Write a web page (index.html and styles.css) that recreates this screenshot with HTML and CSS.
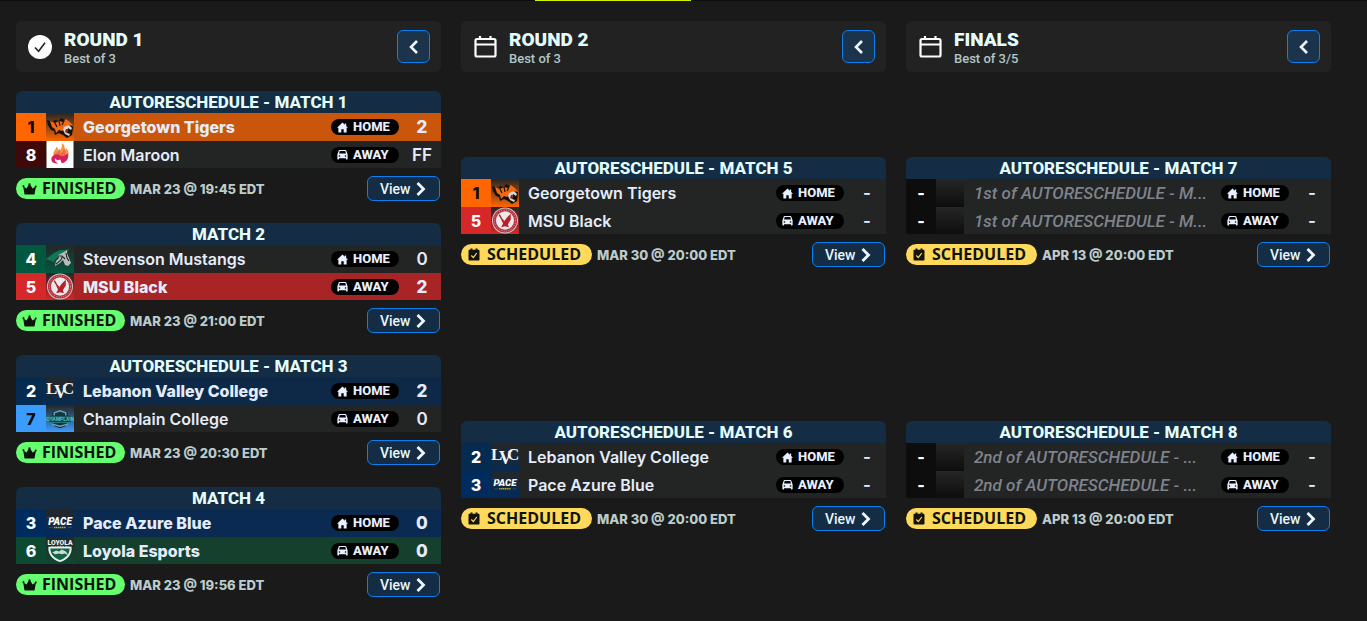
FILE: index.html
```
<!DOCTYPE html>
<html lang="en">
<head>
    <meta charset="utf-8">
    <title>Playoff Bracket</title>
    <link rel="stylesheet" href="styles.css">
</head>
<body>
    <!-- icons and team logos -->
    <svg class="sprite" aria-hidden="true">
        <symbol id="i-check" viewBox="0 0 24 24"><circle cx="12" cy="12" r="12" fill="#fff"/><path d="M7 12.5l3.6 3.8L17 7.8" fill="none" stroke="#222" stroke-width="1.6"/></symbol>
        <symbol id="i-calendar" viewBox="0 0 24 24"><path d="M4 4h17a1.500 1.500 0 0 1 1.500 1.500v14.500a1.500 1.500 0 0 1-1.500 1.500h-17A1.500 1.500 0 0 1 2.500 20V5.500A1.500 1.500 0 0 1 4 4zM2.500 9.500h20M7 1v3M17.500 1v3" fill="none" stroke="#fff" stroke-width="2.200"/></symbol>
        <symbol id="i-left" viewBox="0 0 10 14"><path d="M8 1L2 7l6 6" fill="none" stroke="#eef6ff" stroke-width="2.600"/></symbol>
        <symbol id="i-right" viewBox="0 0 10 14"><path d="M1.500 1l6 6-6 6" fill="none" stroke="#eef6ff" stroke-width="2.800"/></symbol>
        <symbol id="i-home" viewBox="0 0 12 12"><path d="M6 .5L0 6.400h1.500V11.500h3.200V8h2.600v3.500h3.200V6.400H12L10 4.400V1.500H8.500v1.500z" fill="#e8f0ff"/></symbol>
        <symbol id="i-car" viewBox="0 0 12 12"><path fill-rule="evenodd" d="M2.800 1h6.400c.5 0 .8.300 1 .8L11.600 6v5c0 .3-.2.500-.5.500h-.8c-.3 0-.5-.2-.5-.5v-.8H2.200v.8c0 .3-.2.500-.5.500H.9c-.3 0-.5-.2-.5-.5V6l1.400-4.200c.2-.5.500-.8 1-.8zM3 2.200L2.200 5h7.600L9 2.200zM2.700 6.700a.9.9 0 1 0 0 1.800.9.9 0 0 0 0-1.800zM9.300 6.700a.9.9 0 1 0 0 1.800.9.9 0 0 0 0-1.800z" fill="#e8f0ff"/></symbol>
        <symbol id="i-crown" viewBox="0 0 14 12"><path d="M0 3.200a1 1 0 1 1 1.600.8L4 5.500l2-3.600a1.100 1.100 0 1 1 2 0l2 3.600L12.400 4a1 1 0 1 1 .9.500L12 11.500H2L.8 4.300A1 1 0 0 1 0 3.200z" fill="#0c140c"/></symbol>
        <symbol id="i-scheduled" viewBox="0 0 12 12"><path d="M1.500 1.300H2.500V0h2v1.300h3V0h2v1.300h1c.6 0 1 .4 1 1V11c0 .6-.4 1-1 1h-9c-.6 0-1-.4-1-1V2.300c0-.6.400-1 1-1z" fill="#14130c"/><path d="M3.300 7l2 2 3.500-4.500" fill="none" stroke="#ffd95c" stroke-width="1.200"/></symbol>

        <symbol id="l-georgetown" viewBox="0 0 28 28">
            <path d="M1 7l6 2 2-2 4 1 2-3 4 2 4 1 4 6-1 8-5 3-4-3-4-2-4 2-1-4-3-1-3-5z" fill="#15110e"/>
            <path d="M4 8l5 2 4-2 4 1 3-3 4 3 3 4-4-1-4 3-3 3-3-1-3 3-1-4-3-2z" fill="#f06a16"/>
            <path d="M9 10l2 4M13 8l1 5M18 8l-2 4" stroke="#15110e" stroke-width="1.200"/>
            <path d="M18 14l5-2 3 3-1 2-3-2-1 5 3 1-1 2-4-2-2-4z" fill="#d8d6d2"/>
            <path d="M20 16l2 0-1 4-2-1z" fill="#a3190f"/>
        </symbol>
        <symbol id="l-elon" viewBox="0 0 28 28">
            <path fill="#fff" d="M0 0h28v28H0z"/>
            <path d="M7 14c0-4 3-5 3-8 2 1 3 3 2 5 4-2 4-5 4-9 4 3 3 7 2 9 2-1 2-3 2-4 4 4 3 8 2 10z" fill="#f8963c"/>
            <path d="M8 13c3 0 5-3 5-5 2 2 1 4 1 5 3-1 4-4 4-6 3 4 1 6 1 8 2 0 3-2 3-3 1 3 1 6-1 8h-5l-4-3-5 1z" fill="#ee6a4f"/>
            <path d="M5 19c0-3 3-5 6-5 2 0 4 2 6 2l5-3c1 5-1 9-6 10-1-1-1-3-2-4-1 2-4 1-5-1-1 2 0 4 3 5-4 1-7-1-7-4z" fill="#d51f63"/>
        </symbol>
        <symbol id="l-stevenson" viewBox="0 0 28 28">
            <path d="M0 14l8-6 6-3 5 0 4-1-2 4-7 2-4 4-2 2 2 2-5-2z" fill="#0d7757"/>
            <path d="M12 10l6-3 3-2v3l2 5 2 5-3 3-3-1-2-5-3 3-5 3 1-5 3-3z" fill="#b8bcbb"/>
            <path d="M12 11l4 0 3 3M10 19l5-4 1-3M20 8l1 5 2 3" fill="none" stroke="#252b29" stroke-width="1.100"/>
        </symbol>
        <symbol id="l-msu" viewBox="0 0 28 28">
            <circle cx="14" cy="14" r="13.500" fill="#c9c9c9"/>
            <circle cx="14" cy="14" r="11" fill="none" stroke="#b92f3b" stroke-width="3"/>
            <circle cx="14" cy="14" r="11" fill="none" stroke="#e0a3a7" stroke-width="1" stroke-dasharray="1 1.500"/>
            <circle cx="14" cy="14" r="9" fill="#ece9e9"/>
            <path d="M20 7l0 6-3 5 1 3-4-1-4 1 2-4-2-4 3 2 3-4z" fill="#b6202d"/>
            <path d="M8 8l3 5 2 2" fill="none" stroke="#b6202d" stroke-width="1.500"/>
        </symbol>
        <symbol id="l-lebanon" viewBox="0 0 28 28">
            <text x="0" y="17" font-size="17">L</text>
            <text x="8" y="21" font-size="18">V</text>
            <text x="16" y="17" font-size="17">C</text>
        </symbol>
        <symbol id="l-champlain" viewBox="0 0 28 28">
            <path d="M6 7l8-2 8 2v4l4 1-1 6-4 1-1 3-6 2-6-2-1-3-4-1-1-6 4-1z" fill="#12333f"/>
            <path d="M8 11V8l6-2 6 2v3M6 20l8 2 8-2" fill="none" stroke="#6da3ad" stroke-width="1.500"/>
            <path d="M1 12.500h26M3 18h22" stroke="#2f9ba5" stroke-width=".8"/>
            <text x="14" y="17" text-anchor="middle">CHAMPLAIN</text>
        </symbol>
        <symbol id="l-pace" viewBox="0 0 28 28">
            <text x="14" y="16" font-size="10" text-anchor="middle">PACE</text>
            <path d="M1 8.500h5M3 18.500h4M22 18.500h4" stroke="#35608c" stroke-width=".6"/>
            <path d="M8 18.500h12" stroke="#c8a92c" stroke-width="1.600" stroke-dasharray="1.400 .5"/>
        </symbol>
        <symbol id="l-loyola" viewBox="0 0 28 28">
            <path d="M2 10l12-1 12 1c1 8-5 14-12 16C7 24 1 18 2 10z" fill="#e9eeec"/>
            <path d="M4 12h20c0 6-4 10-10 12C8 22 4 18 4 12z" fill="#146348"/>
            <path d="M6 16l4-2 3 1 3-2 4 2 3 4-4-2-3 1-3-1-4 1z" fill="#cfd9d5"/>
            <path d="M8 9.500h12" stroke="#1a3329" stroke-width="1" stroke-dasharray="1 .7"/>
            <text x="14" y="8" font-size="7" text-anchor="middle">LOYOLA</text>
        </symbol>
    </svg>

    <div class="topbar"><div class="topbar-active"></div></div>

    <main class="bracket">
        <section class="round">
            <header class="round-header">
                <svg class="round-icon"><use href="#i-check"/></svg>
                <div class="round-info">
                    <h2>ROUND 1</h2>
                    <p>Best of 3</p>
                </div>
                <button class="collapse-btn" aria-label="Collapse round 1"><svg><use href="#i-left"/></svg></button>
            </header>
            <div class="matches">
                <article class="match">
                    <h3>AUTORESCHEDULE - MATCH 1</h3>
                    <div class="teams">
                        <div class="team georgetown winner">
                            <span class="seed">1</span><svg class="logo"><use href="#l-georgetown"/></svg>
                            <span class="name">Georgetown Tigers</span>
                            <span class="side"><svg><use href="#i-home"/></svg>HOME</span><span class="score">2</span>
                        </div>
                        <div class="team elon">
                            <span class="seed">8</span><svg class="logo"><use href="#l-elon"/></svg>
                            <span class="name">Elon Maroon</span>
                            <span class="side"><svg><use href="#i-car"/></svg>AWAY</span><span class="score">FF</span>
                        </div>
                    </div>
                    <footer class="match-footer">
                        <span class="badge finished"><svg><use href="#i-crown"/></svg>FINISHED</span>
                        <time>MAR 23 @ 19:45 EDT</time>
                        <button class="view-btn">View<svg><use href="#i-right"/></svg></button>
                    </footer>
                </article>
                <article class="match">
                    <h3>MATCH 2</h3>
                    <div class="teams">
                        <div class="team stevenson">
                            <span class="seed">4</span><svg class="logo"><use href="#l-stevenson"/></svg>
                            <span class="name">Stevenson Mustangs</span>
                            <span class="side"><svg><use href="#i-home"/></svg>HOME</span><span class="score">0</span>
                        </div>
                        <div class="team msu winner">
                            <span class="seed">5</span><svg class="logo"><use href="#l-msu"/></svg>
                            <span class="name">MSU Black</span>
                            <span class="side"><svg><use href="#i-car"/></svg>AWAY</span><span class="score">2</span>
                        </div>
                    </div>
                    <footer class="match-footer">
                        <span class="badge finished"><svg><use href="#i-crown"/></svg>FINISHED</span>
                        <time>MAR 23 @ 21:00 EDT</time>
                        <button class="view-btn">View<svg><use href="#i-right"/></svg></button>
                    </footer>
                </article>
                <article class="match">
                    <h3>AUTORESCHEDULE - MATCH 3</h3>
                    <div class="teams">
                        <div class="team lebanon winner">
                            <span class="seed">2</span><svg class="logo"><use href="#l-lebanon"/></svg>
                            <span class="name">Lebanon Valley College</span>
                            <span class="side"><svg><use href="#i-home"/></svg>HOME</span><span class="score">2</span>
                        </div>
                        <div class="team champlain">
                            <span class="seed">7</span><svg class="logo"><use href="#l-champlain"/></svg>
                            <span class="name">Champlain College</span>
                            <span class="side"><svg><use href="#i-car"/></svg>AWAY</span><span class="score">0</span>
                        </div>
                    </div>
                    <footer class="match-footer">
                        <span class="badge finished"><svg><use href="#i-crown"/></svg>FINISHED</span>
                        <time>MAR 23 @ 20:30 EDT</time>
                        <button class="view-btn">View<svg><use href="#i-right"/></svg></button>
                    </footer>
                </article>
                <article class="match">
                    <h3>MATCH 4</h3>
                    <div class="teams">
                        <div class="team pace winner">
                            <span class="seed">3</span><svg class="logo"><use href="#l-pace"/></svg>
                            <span class="name">Pace Azure Blue</span>
                            <span class="side"><svg><use href="#i-home"/></svg>HOME</span><span class="score">0</span>
                        </div>
                        <div class="team loyola winner">
                            <span class="seed">6</span><svg class="logo"><use href="#l-loyola"/></svg>
                            <span class="name">Loyola Esports</span>
                            <span class="side"><svg><use href="#i-car"/></svg>AWAY</span><span class="score">0</span>
                        </div>
                    </div>
                    <footer class="match-footer">
                        <span class="badge finished"><svg><use href="#i-crown"/></svg>FINISHED</span>
                        <time>MAR 23 @ 19:56 EDT</time>
                        <button class="view-btn">View<svg><use href="#i-right"/></svg></button>
                    </footer>
                </article>
            </div>
        </section>

        <section class="round">
            <header class="round-header">
                <svg class="round-icon"><use href="#i-calendar"/></svg>
                <div class="round-info">
                    <h2>ROUND 2</h2>
                    <p>Best of 3</p>
                </div>
                <button class="collapse-btn" aria-label="Collapse round 2"><svg><use href="#i-left"/></svg></button>
            </header>
            <div class="matches">
                <article class="match">
                    <h3>AUTORESCHEDULE - MATCH 5</h3>
                    <div class="teams">
                        <div class="team georgetown">
                            <span class="seed">1</span><svg class="logo"><use href="#l-georgetown"/></svg>
                            <span class="name">Georgetown Tigers</span>
                            <span class="side"><svg><use href="#i-home"/></svg>HOME</span><span class="score">-</span>
                        </div>
                        <div class="team msu">
                            <span class="seed">5</span><svg class="logo"><use href="#l-msu"/></svg>
                            <span class="name">MSU Black</span>
                            <span class="side"><svg><use href="#i-car"/></svg>AWAY</span><span class="score">-</span>
                        </div>
                    </div>
                    <footer class="match-footer">
                        <span class="badge scheduled"><svg><use href="#i-scheduled"/></svg>SCHEDULED</span>
                        <time>MAR 30 @ 20:00 EDT</time>
                        <button class="view-btn">View<svg><use href="#i-right"/></svg></button>
                    </footer>
                </article>
                <article class="match">
                    <h3>AUTORESCHEDULE - MATCH 6</h3>
                    <div class="teams">
                        <div class="team lebanon">
                            <span class="seed">2</span><svg class="logo"><use href="#l-lebanon"/></svg>
                            <span class="name">Lebanon Valley College</span>
                            <span class="side"><svg><use href="#i-home"/></svg>HOME</span><span class="score">-</span>
                        </div>
                        <div class="team pace">
                            <span class="seed">3</span><svg class="logo"><use href="#l-pace"/></svg>
                            <span class="name">Pace Azure Blue</span>
                            <span class="side"><svg><use href="#i-car"/></svg>AWAY</span><span class="score">-</span>
                        </div>
                    </div>
                    <footer class="match-footer">
                        <span class="badge scheduled"><svg><use href="#i-scheduled"/></svg>SCHEDULED</span>
                        <time>MAR 30 @ 20:00 EDT</time>
                        <button class="view-btn">View<svg><use href="#i-right"/></svg></button>
                    </footer>
                </article>
            </div>
        </section>

        <section class="round">
            <header class="round-header">
                <svg class="round-icon"><use href="#i-calendar"/></svg>
                <div class="round-info">
                    <h2>FINALS</h2>
                    <p>Best of 3/5</p>
                </div>
                <button class="collapse-btn" aria-label="Collapse finals"><svg><use href="#i-left"/></svg></button>
            </header>
            <div class="matches">
                <article class="match">
                    <h3>AUTORESCHEDULE - MATCH 7</h3>
                    <div class="teams">
                        <div class="team tbd">
                            <span class="seed">-</span><span class="logo"></span>
                            <span class="name">1st of AUTORESCHEDULE - M...</span>
                            <span class="side"><svg><use href="#i-home"/></svg>HOME</span><span class="score">-</span>
                        </div>
                        <div class="team tbd">
                            <span class="seed">-</span><span class="logo"></span>
                            <span class="name">1st of AUTORESCHEDULE - M...</span>
                            <span class="side"><svg><use href="#i-car"/></svg>AWAY</span><span class="score">-</span>
                        </div>
                    </div>
                    <footer class="match-footer">
                        <span class="badge scheduled"><svg><use href="#i-scheduled"/></svg>SCHEDULED</span>
                        <time>APR 13 @ 20:00 EDT</time>
                        <button class="view-btn">View<svg><use href="#i-right"/></svg></button>
                    </footer>
                </article>
                <article class="match">
                    <h3>AUTORESCHEDULE - MATCH 8</h3>
                    <div class="teams">
                        <div class="team tbd">
                            <span class="seed">-</span><span class="logo"></span>
                            <span class="name">2nd of AUTORESCHEDULE - ...</span>
                            <span class="side"><svg><use href="#i-home"/></svg>HOME</span><span class="score">-</span>
                        </div>
                        <div class="team tbd">
                            <span class="seed">-</span><span class="logo"></span>
                            <span class="name">2nd of AUTORESCHEDULE - ...</span>
                            <span class="side"><svg><use href="#i-car"/></svg>AWAY</span><span class="score">-</span>
                        </div>
                    </div>
                    <footer class="match-footer">
                        <span class="badge scheduled"><svg><use href="#i-scheduled"/></svg>SCHEDULED</span>
                        <time>APR 13 @ 20:00 EDT</time>
                        <button class="view-btn">View<svg><use href="#i-right"/></svg></button>
                    </footer>
                </article>
            </div>
        </section>
    </main>
</body>
</html>
```
FILE: styles.css
```
* { box-sizing: border-box; }
body { margin: 0; background: #191a19; color: #e3fdfd; font-family: Roboto, sans-serif; }
h2, h3, p { margin: 0; }
button { font-family: inherit; cursor: pointer; }
.sprite { display: none; }

.topbar { height: 1px; background: #0c0d0d; display: grid; grid-template-columns: 535fr 156fr 676fr; }
.topbar-active { grid-column: 2; background: #d2f000; }

/* rounds */
.bracket { display: grid; grid-template-columns: repeat(3, 1fr); gap: 20px; padding: 20px 36px 0 16px; }
.round { display: flex; flex-direction: column; }
.round-header { display: flex; align-items: center; height: 51px; margin-bottom: 19px; padding: 0 11px 0 12px; background: #222; border-radius: 6px; }
.round-icon { width: 24px; height: 24px; margin-right: 12px; }
.round-info { flex: 1; padding-top: 3px; }
.round-info h2 { font-size: 19px; line-height: 20px; font-weight: 900; }
.round-info p { font-size: 13px; line-height: 17px; font-weight: 500; color: #b2c6c6; }
.collapse-btn { display: flex; align-items: center; justify-content: center; width: 33px; height: 33px; padding: 0; background: #1b344b; border: 1px solid #0a7ff0; border-radius: 6px; }
.collapse-btn svg { width: 10px; height: 14px; }

/* matches */
.matches { flex: 1; display: flex; flex-direction: column; justify-content: space-around; }
.match { height: 132px; }
.match h3 { font-size: 17px; line-height: 23px; height: 22px; font-weight: 800; text-align: center; background: #142d44; border-radius: 6px 6px 0 0; }
.teams { display: grid; grid-template-rows: 28px 27px; background: #232424; }
.team { display: flex; align-items: center; min-width: 0; }
.seed { display: flex; align-items: center; justify-content: center; align-self: stretch; width: 30px; background: var(--team); color: #fff; font: 800 16px Inter, sans-serif; }
.logo { align-self: stretch; width: 28px; height: auto; background: linear-gradient(#262626, var(--team)); }
.name { flex: 1; min-width: 0; margin: 0 9px; font: 600 16px/24px Inter, sans-serif; color: #e4ecfb; white-space: nowrap; overflow: hidden; text-overflow: ellipsis; }
.side { display: flex; align-items: center; gap: 5px; width: 68px; height: 16px; padding-left: 6px; background: #000; border-radius: 8px; color: #e8f0ff; font-size: 13px; line-height: 16px; font-weight: 800; }
.side svg { width: 11px; height: 11px; }
.score { width: 38px; margin-left: 4px; text-align: center; font: 600 17px Inter, sans-serif; color: #e4ecfb; }
.winner { background: var(--row); }
.winner .name, .winner .score { font-weight: 800; }
.tbd .name { margin: 0 9px 0 10px; font: italic 500 17px/24px Roboto, sans-serif; color: #7e838c; }

.georgetown { --team: #ff6600; --row: #c9560b; }
.elon { --team: #400909; }
.stevenson { --team: #00583f; }
.msu { --team: #d62828; --row: #a82425; }
.lebanon { --team: #062b50; --row: #0e2947; }
.champlain { --team: #3b9cff; }
.pace { --team: #002b5f; --row: #0a2a52; }
.loyola { --team: #0c4931; --row: #14402d; }
.tbd { --team: #0d0d0d; }
.georgetown .seed, .champlain .seed { color: #0a0a0a; }

/* lettering inside the logos */
#l-lebanon text { font-family: "Liberation Serif", serif; font-weight: 700; fill: #f2f2f2; }
#l-pace text { font-family: Roboto, sans-serif; font-weight: 900; font-style: italic; fill: #fff; }
#l-loyola text { font-family: Roboto, sans-serif; font-weight: 900; fill: #f2f2f2; }
#l-champlain text { font-family: Roboto, sans-serif; font-weight: 900; font-size: 5px; fill: #41c0c4; }

.match-footer { display: flex; align-items: center; height: 25px; margin-top: 8px; padding-right: 1px; }
.badge { display: flex; align-items: center; height: 21px; border-radius: 11px; color: #0c140c; font: 700 16px/21px "Open Sans", sans-serif; }
.finished { width: 109px; padding-left: 6px; gap: 5px; background: #66ff70; }
.finished svg { width: 15px; height: 12px; }
.scheduled { width: 131px; padding-left: 7px; gap: 7px; background: #ffd95c; }
.scheduled svg { width: 12px; height: 13px; }
.match-footer time { flex: 1; margin-left: 5px; font: 800 13px Inter, sans-serif; color: #bccbcb; white-space: nowrap; }
.view-btn { display: flex; align-items: center; gap: 5px; width: 73px; height: 25px; padding: 0 0 0 12px; background: #142d44; border: 1px solid #0a7ff0; border-radius: 6px; color: #e8f6fb; font-size: 14px; font-weight: 500; }
.view-btn svg { width: 10px; height: 14px; }
```
